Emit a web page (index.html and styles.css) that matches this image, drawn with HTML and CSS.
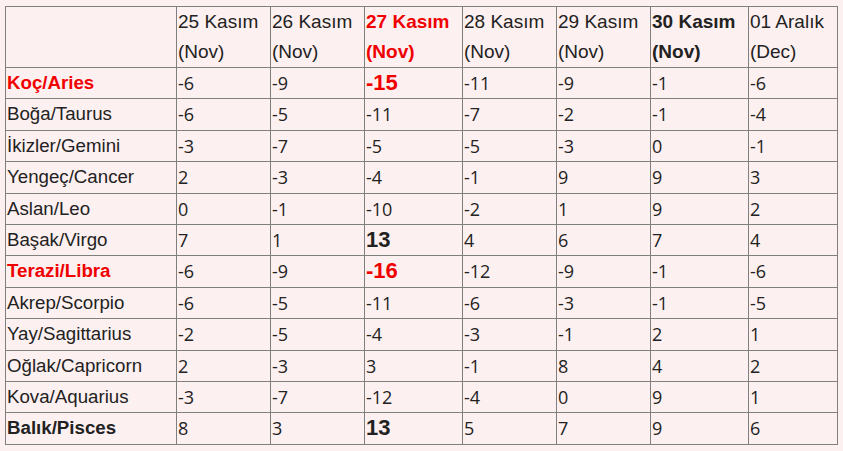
FILE: index.html
```html
<!DOCTYPE html>
<html>
<head>
<meta charset="utf-8">
<link rel="stylesheet" href="styles.css">
</head>
<body>
<table class="tbl">
  <colgroup>
    <col class="c0"><col class="c1"><col class="c2"><col class="c3"><col class="c4"><col class="c5"><col class="c6"><col class="c7">
  </colgroup>
  <thead>
    <tr>
      <th></th>
      <th>25 Kasım<br>(Nov)</th>
      <th>26 Kasım<br>(Nov)</th>
      <th class="red b">27 Kasım<br>(Nov)</th>
      <th>28 Kasım<br>(Nov)</th>
      <th>29 Kasım<br>(Nov)</th>
      <th class="b">30 Kasım<br>(Nov)</th>
      <th>01 Aralık<br>(Dec)</th>
    </tr>
  </thead>
  <tbody>
    <tr><td class="lbl red b">Koç/Aries</td><td>-6</td><td>-9</td><td class="big red">-15</td><td>-11</td><td>-9</td><td>-1</td><td>-6</td></tr>
    <tr><td class="lbl">Boğa/Taurus</td><td>-6</td><td>-5</td><td>-11</td><td>-7</td><td>-2</td><td>-1</td><td>-4</td></tr>
    <tr><td class="lbl">İkizler/Gemini</td><td>-3</td><td>-7</td><td>-5</td><td>-5</td><td>-3</td><td>0</td><td>-1</td></tr>
    <tr><td class="lbl">Yengeç/Cancer</td><td>2</td><td>-3</td><td>-4</td><td>-1</td><td>9</td><td>9</td><td>3</td></tr>
    <tr><td class="lbl">Aslan/Leo</td><td>0</td><td>-1</td><td>-10</td><td>-2</td><td>1</td><td>9</td><td>2</td></tr>
    <tr><td class="lbl">Başak/Virgo</td><td>7</td><td>1</td><td class="big">13</td><td>4</td><td>6</td><td>7</td><td>4</td></tr>
    <tr><td class="lbl red b">Terazi/Libra</td><td>-6</td><td>-9</td><td class="big red">-16</td><td>-12</td><td>-9</td><td>-1</td><td>-6</td></tr>
    <tr><td class="lbl">Akrep/Scorpio</td><td>-6</td><td>-5</td><td>-11</td><td>-6</td><td>-3</td><td>-1</td><td>-5</td></tr>
    <tr><td class="lbl">Yay/Sagittarius</td><td>-2</td><td>-5</td><td>-4</td><td>-3</td><td>-1</td><td>2</td><td>1</td></tr>
    <tr><td class="lbl">Oğlak/Capricorn</td><td>2</td><td>-3</td><td>3</td><td>-1</td><td>8</td><td>4</td><td>2</td></tr>
    <tr><td class="lbl">Kova/Aquarius</td><td>-3</td><td>-7</td><td>-12</td><td>-4</td><td>0</td><td>9</td><td>1</td></tr>
    <tr><td class="lbl b">Balık/Pisces</td><td>8</td><td>3</td><td class="big">13</td><td>5</td><td>7</td><td>9</td><td>6</td></tr>
  </tbody>
</table>
</body>
</html>
```

FILE: styles.css
```css
html, body {
  margin: 0;
  padding: 0;
  background: #fdf0f0;
}
body {
  padding: 6px 0 0 5px;
  color: #222;
  font-family: "Liberation Sans", Arial, sans-serif;
}
.tbl {
  border-collapse: collapse;
  table-layout: fixed;
  width: 833px;
  background: #fdf0f0;
}
.c0 { width: 171px; }
.c1 { width: 94px; }
.c2 { width: 94px; }
.c3 { width: 98px; }
.c4 { width: 94px; }
.c5 { width: 94px; }
.c6 { width: 98px; }
.c7 { width: 89px; }
.tbl th, .tbl td {
  border: 1px solid #7f7f7f;
  padding: 0 0 0 1px;
  text-align: left;
  vertical-align: middle;
  white-space: nowrap;
}
.tbl th {
  font-family: "Liberation Sans", Arial, sans-serif;
  font-size: 19px;
  font-weight: normal;
  line-height: 30px;
  vertical-align: top;
}
.tbl td {
  font-family: "Open Sans", sans-serif;
  font-size: 18px;
  line-height: 30.4px;
}
.tbl td.lbl {
  font-family: "Liberation Sans", Arial, sans-serif;
  font-size: 18.7px;
}
.tbl .b {
  font-weight: bold;
}
.tbl .red {
  color: #f00000;
}
.tbl td.big {
  font-family: "Liberation Sans", Arial, sans-serif;
  font-size: 22px;
  font-weight: bold;
}
```
